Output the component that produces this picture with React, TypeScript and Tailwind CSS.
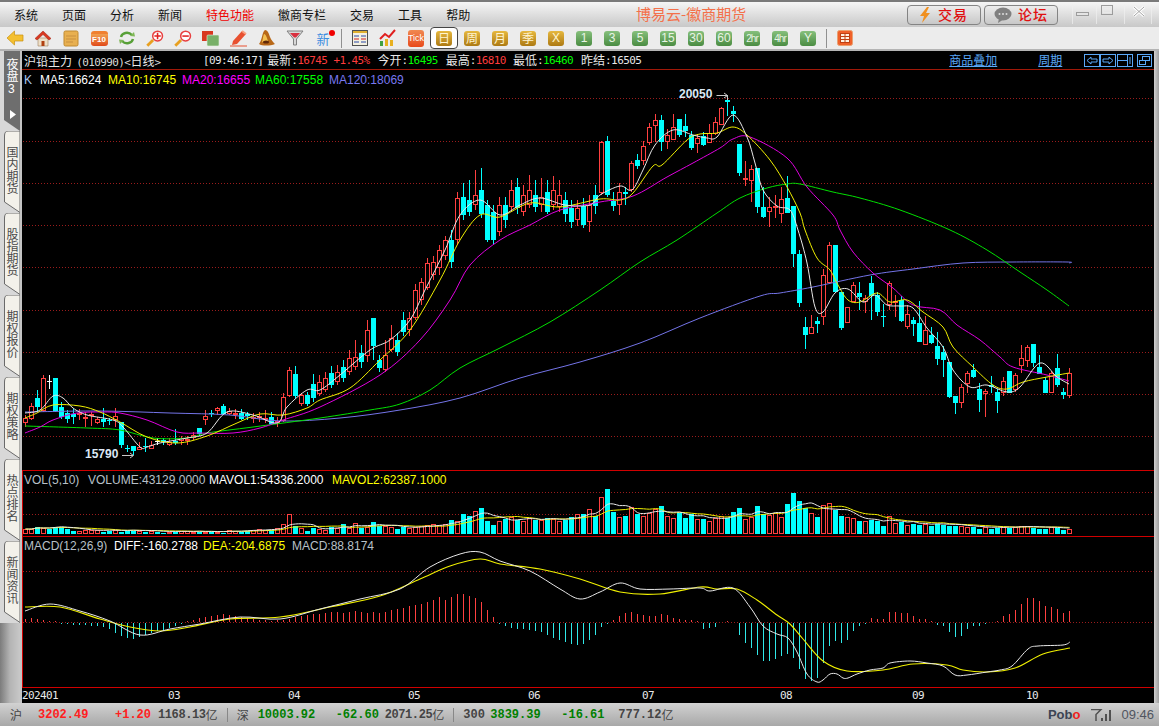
import type { ReactNode } from 'react'

const cjk = { fontFamily: '"Noto Sans CJK SC", sans-serif' }
const mono = { fontFamily: '"DejaVu Sans Mono", "Noto Sans CJK SC", monospace' }
const sans = { fontFamily: '"Liberation Sans", "Noto Sans CJK SC", sans-serif' }

// [type, body top, body bottom, high, low] in page pixels, type 0 red 1 cyan 2 white
const candles: number[][] = [
	[0,418,423,415,427],[0,406,419,403,420],[1,398,407,390,412],[0,378,411,375,412],[2,381,381,375,389],
	[1,378,411,378,412],[1,407,417,402,419],[1,413,419,410,423],[1,414,417,409,424],[0,413,415,409,420],
	[0,417,419,412,427],[0,414,416,412,426],[0,419,423,417,424],[1,419,422,408,427],[1,420,421,418,425],
	[0,416,420,408,427],[1,422,445,422,448],[1,448,449,445,452],[1,446,451,446,455],[0,447,450,442,450],
	[1,446,447,438,452],[0,445,449,441,449],[2,441,441,438,445],[1,440,442,438,445],[0,442,445,438,446],
	[1,441,443,429,445],[0,438,441,436,445],[0,439,441,436,445],[0,435,438,432,440],[1,428,434,428,436],
	[0,416,420,410,425],[1,413,414,410,417],[0,408,411,407,415],[1,406,414,404,415],[0,411,414,408,415],
	[0,413,414,409,419],[1,413,419,409,420],[1,414,416,412,420],[0,417,418,413,423],[0,416,417,412,422],
	[0,418,420,410,423],[1,417,424,412,425],[0,421,423,417,427],[0,397,421,393,422],[0,370,396,367,397],
	[1,374,396,366,398],[0,395,404,393,406],[1,395,404,392,406],[1,384,398,374,402],[0,382,394,375,396],
	[0,378,390,372,392],[1,373,385,366,388],[0,372,382,365,385],[1,367,378,360,382],[0,358,372,350,375],
	[0,357,367,340,370],[1,353,362,345,368],[0,330,356,320,362],[1,318,346,318,360],[1,360,368,355,372],
	[0,355,370,340,372],[0,338,350,325,352],[1,340,352,333,356],[1,320,332,312,336],[0,318,330,312,336],
	[0,290,318,284,320],[0,282,300,278,305],[0,263,288,258,290],[0,262,275,256,280],[0,250,268,245,275],
	[0,240,256,236,260],[1,240,262,230,268],[0,198,240,192,245],[1,197,215,183,220],[1,200,212,180,216],
	[0,195,205,170,210],[1,190,214,168,218],[1,205,240,200,242],[1,212,240,205,244],[0,205,232,197,236],
	[1,205,220,197,228],[0,190,207,180,212],[1,187,208,178,214],[0,195,212,185,216],[0,190,205,175,208],
	[1,195,207,180,212],[0,197,205,178,212],[1,192,212,180,214],[0,190,205,176,210],[0,195,207,180,212],
	[1,200,214,192,222],[1,208,222,200,228],[0,208,220,200,226],[1,206,225,198,228],[0,205,222,195,232],
	[1,195,206,185,214],[0,142,193,141,195],[1,141,195,136,197],[1,201,206,192,211],[0,192,205,183,215],
	[1,192,194,187,205],[0,163,190,161,192],[1,160,166,154,169],[0,146,161,141,165],[0,127,143,123,145],
	[0,120,126,114,142],[1,120,142,115,151],[0,135,142,129,149],[0,127,140,114,140],[1,119,135,119,137],
	[1,126,131,114,137],[1,135,148,131,150],[0,138,144,134,153],[1,136,145,132,146],[0,133,143,124,143],
	[0,122,134,117,135],[0,108,125,107,125],[1,100,102,95,116],[1,111,114,106,122],[1,144,173,144,176],
	[0,178,180,161,186],[0,169,181,165,202],[1,168,207,168,213],[1,207,217,187,218],[0,207,212,197,227],
	[0,206,208,195,218],[0,199,214,187,223],[1,198,213,176,213],[1,206,254,206,267],[1,254,303,250,307],
	[1,327,335,317,349],[0,327,334,315,334],[1,321,324,317,333],[0,275,317,269,325],[0,245,283,242,283],
	[1,245,292,245,292],[1,292,328,292,330],[0,307,323,307,323],[0,285,302,282,302],[1,293,297,282,310],
	[0,298,302,295,313],[1,283,296,276,320],[1,295,312,292,316],[1,316,316,304,327],[0,283,305,281,310],
	[0,301,303,295,317],[1,300,321,296,322],[0,314,327,305,329],[1,320,324,317,336],[1,323,342,301,342],
	[0,330,345,316,345],[1,335,343,327,344],[1,346,359,332,365],[1,352,360,346,377],[1,362,397,362,398],
	[1,396,403,396,414],[0,387,403,384,408],[0,373,384,371,393],[1,370,377,364,378],[1,389,400,383,412],
	[0,391,394,389,417],[1,385,387,376,393],[1,392,401,389,413],[0,381,393,377,396],[1,371,393,371,393],
	[0,375,390,373,392],[0,358,366,345,373],[0,347,361,345,367],[1,344,363,344,367],[1,367,374,355,374],
	[1,380,393,377,393],[0,373,393,371,393],[1,368,385,354,387],[1,392,395,388,399],[0,373,396,368,398],
]

const volumes = [
	4,4,7,5,5,7,7,5,3,2, 3,3,3,2,3,3,2,3,3,2, 2,2,2,1,1,2,2,2,1,2, 1,2,1,1,3,2,2,3,3,4, 3,4,5,9,19,8,5,3,6,4,
	3,7,5,10,5,10,6,6,12,8, 7,6,5,7,5,6,7,8,9,8, 9,14,12,20,18,22,26,13,9,12, 15,16,14,12,15,14,13,16,14,12,
	14,17,19,20,24,18,36,45,22,16, 18,26,20,17,20,24,28,17,15,21, 16,20,14,15,12,15,17,16,22,26,
	14,16,28,20,18,20,16,30,41,33, 26,20,17,28,30,24,18,16,15,13, 12,14,13,8,17,10,12,8,10,9,
	9,8,10,9,8,8,7,6,7,5, 6,5,6,6,6,6,7,7,6,5, 5,6,6,4,4,
]

const macdBars = [
	3,4,3,2,1,1,-1,-1,-2,-2, -2,-3,-3,-4,-6,-10,-13,-15,-16,-14, -12,-10,-8,-7,-5,-3,-1,1,2,4,
	5,6,7,8,7,6,5,4,3,2, 2,1,2,2,3,5,6,7,8,8, 9,10,10,9,10,11,10,9,10,9, 10,12,13,14,16,17,18,20,22,25,
	22,25,28,28,26,24,20,12,5,-1, -3,-5,-6,-6,-7,-8,-9,-12,-15,-17, -19,-21,-22,-21,-17,-12,-4,-1,2,6,
	9,10,8,7,6,6,8,7,4,3,2,2,1, -6,-5,-4,0,1,0,-12,-20,-25,-32,-38,-38,-36,-33,-31,-35,-46,-56,-58,-55,-40,
	-23,-18,-20,-17,-8,-3,-1,4,3,3,10,10,9,9,6,3,3,1,-2,-3,-9,-14,-13,-6,-3,-3,-1,0,1,6,8,12,18,24,24,21,16,15,13,9,11,
]

const ma5 = '25,413 40,410 53,396 63,398 73,408 87,415 113,420 123,427 140,447 147,447 160,443 187,438 207,433 227,412 253,415 277,423 287,407 307,390 320,390 340,375 370,350 390,340 410,320 425,290 445,250 460,215 480,200 500,215 520,205 540,198 565,205 590,205 600,195 620,186 632,190 643,170 655,145 673,130 693,135 707,138 717,137 733,115 747,137 755,163 763,190 777,206 790,210 798,230 807,263 815,307 823,312 835,293 848,289 863,302 875,295 887,305 900,306 913,308 927,328 943,347 953,370 970,387 987,385 1007,392 1020,387 1040,363 1057,377 1069,384'
const ma10 = '25,418 37,413 53,405 80,406 100,412 120,422 147,437 177,443 207,436 237,423 260,414 283,415 307,408 320,400 350,388 380,360 410,330 440,280 460,240 480,215 500,217 530,203 560,207 600,199 620,200 633,193 653,166 662,165 687,140 700,134 717,133 733,127 747,135 770,160 787,187 800,213 805,230 817,258 830,270 838,285 848,300 860,302 877,293 890,302 907,300 923,312 943,327 953,347 973,367 993,385 1007,389 1023,382 1047,377 1069,373'
const ma20 = '25,433 40,427 53,420 77,413 103,412 120,413 147,420 177,432 200,433 233,433 260,428 283,420 320,407 380,375 420,340 450,300 470,265 500,240 530,225 560,210 600,202 633,196 667,177 693,163 720,148 733,139 750,137 787,158 807,187 833,215 840,230 853,252 873,273 893,288 913,305 940,310 957,325 980,340 1000,357 1013,367 1047,375 1069,381'
const ma60 = '25,426 87,428 120,430 153,438 187,438 207,433 253,427 320,418 370,410 400,404 430,390 460,368 500,348 550,322 600,290 640,262 677,240 717,213 740,198 767,188 787,184 800,184 833,192 860,198 900,210 950,230 987,250 1020,272 1047,290 1069,306'
const ma120 = '25,412 100,411 170,413 230,415 280,421 340,418 400,410 460,398 520,378 580,362 640,343 700,318 760,296 780,293 813,287 870,275 913,269 963,263 1013,262 1067,262 1069,263'
const diff = '25,612 50,605 80,612 110,622 140,636 170,630 200,625 240,618 280,620 320,610 360,600 400,590 430,568 460,555 480,553 500,562 530,572 560,590 580,600 600,593 620,584 640,590 670,590 700,589 710,592 733,589 750,608 763,627 777,635 788,639 797,653 807,675 817,683 823,681 830,675 837,675 843,679 848,679 857,675 870,671 883,669 890,664 910,662 927,664 943,667 955,676 967,676 987,673 1000,671 1012,667 1028,650 1038,647 1063,646 1070,643'
const dea = '25,608 60,608 100,620 130,628 160,632 190,628 230,620 280,618 330,608 380,597 420,580 450,567 480,560 500,565 540,570 580,580 620,593 660,595 700,588 717,590 737,590 757,601 777,616 790,625 803,640 823,662 847,672 883,671 913,665 947,666 963,671 987,673 1015,669 1043,655 1070,649'

// turns the hand-read points into a soft curve, the averages are not angular in the picture
function curve(points: string) {
	const p = points.split(' ').map(s => s.split(',').map(Number))
	let d = `M${p[0][0]} ${p[0][1]}`
	for (let i = 0; i < p.length - 1; i++) {
		const a = p[Math.max(i - 1, 0)]
		const b = p[i]
		const c = p[i + 1]
		const e = p[Math.min(i + 2, p.length - 1)]
		const c1 = [b[0] + (c[0] - a[0]) / 6, b[1] + (c[1] - a[1]) / 6]
		const c2 = [c[0] - (e[0] - b[0]) / 6, c[1] - (e[1] - b[1]) / 6]
		d += `C${c1[0]} ${c1[1]} ${c2[0]} ${c2[1]} ${c[0]} ${c[1]}`
	}
	return d
}

function avgLine(period: number) {
	return volumes
		.map((_, i) => {
			const part = volumes.slice(Math.max(0, i - period + 1), i + 1)
			const avg = part.reduce((a, b) => a + b, 0) / part.length
			return `${25.5 + i * 6},${533 - avg}`
		})
		.join(' ')
}

function Grid({ ys }: { ys: number[] }) {
	return (
		<>
			{ys.map(y => (
				<line key={y} x1={23} x2={1154} y1={y + 0.5} y2={y + 0.5} stroke="#9a1c1c" strokeDasharray="1 2" />
			))}
		</>
	)
}

function MainChart() {
	return (
		<svg className="block" width={1132} height={400} viewBox="22 70 1132 400">
			<Grid ys={[98, 141, 183, 225, 267, 310, 352, 394, 436]} />
			<g shapeRendering="crispEdges">
				{candles.map(([t, top, bot, hi, lo], i) => {
					const x = 25 + i * 6
					if (t === 0) {
						return (
							<g key={i}>
								<rect x={x} y={hi} width={1} height={Math.max(top - hi, 0)} fill="#ff4040" />
								<rect x={x} y={bot} width={1} height={Math.max(lo - bot, 0)} fill="#ff4040" />
								<rect x={x - 1.5} y={top + 0.5} width={4} height={Math.max(bot - top - 1, 1)} fill="black" stroke="#ff4040" />
							</g>
						)
					}
					const color = t === 1 ? '#00ffff' : '#ffffff'
					return (
						<g key={i}>
							<rect x={x} y={hi} width={1} height={lo - hi} fill={color} />
							<rect x={x - 2} y={top} width={5} height={Math.max(bot - top, 1)} fill={color} />
						</g>
					)
				})}
			</g>
			<g fill="none" strokeWidth={1}>
				<path d={curve(ma120)} stroke="#7474e8" />
				<path d={curve(ma60)} stroke="#00e000" />
				<path d={curve(ma20)} stroke="#e000e0" />
				<path d={curve(ma10)} stroke="#f0f000" />
				<path d={curve(ma5)} stroke="#e8e8e8" />
			</g>
			<path d="M716.5 95.5H727.5V100M724 93l3.5 2.5-3.5 2.5" fill="none" stroke="#c8c8c8" />
			<path d="M122 455.5H133M130 453l3.5 2.5-3.5 2.5" fill="none" stroke="#c8c8c8" />
		</svg>
	)
}

function VolChart() {
	return (
		<svg className="block" width={1131} height={64} viewBox="23 471 1131 64">
			<Grid ys={[492, 514]} />
			<g shapeRendering="crispEdges">
				{volumes.map((h, i) => {
					const x = 25 + i * 6
					const up = candles[i][0] === 0
					return up ? (
						<rect key={i} x={x - 1.5} y={533.5 - h} width={4} height={h} fill="black" stroke="#ff4040" />
					) : (
						<rect key={i} x={x - 2} y={534 - h} width={5} height={h} fill="#00ffff" />
					)
				})}
			</g>
			<path d={curve(avgLine(10))} fill="none" stroke="#f0f000" />
			<path d={curve(avgLine(5))} fill="none" stroke="#e8e8e8" />
		</svg>
	)
}

function MacdChart() {
	return (
		<svg className="block" width={1131} height={149} viewBox="23 538 1131 149">
			<Grid ys={[572, 623]} />
			<g shapeRendering="crispEdges">
				{macdBars.map((v, i) => {
					const x = 25 + i * 6
					return v >= 0 ? (
						<rect key={i} x={x} y={623 - v} width={1} height={v} fill="#ff4040" />
					) : (
						<rect key={i} x={x} y={624} width={1} height={-v} fill="#30e8e8" />
					)
				})}
			</g>
			<path d={curve(dea)} fill="none" stroke="#f0f000" strokeWidth={1.1} />
			<path d={curve(diff)} fill="none" stroke="#e8e8e8" />
		</svg>
	)
}

function Tab({ label }: { label: string }) {
	return (
		<div className="relative h-[82px] w-[20px] shrink-0 bg-[#d8d8d8]">
			<svg className="absolute inset-0" width={20} height={82}>
				<path d="M20 0H8Q4.500 0 4.500 5V71L20 81.500Z" fill="#f3f1ea" stroke="#6a6a6a" />
			</svg>
			<span
				className="absolute left-[6px] top-[15px] text-[12px] leading-[12px] text-[#4a4a4a] [writing-mode:vertical-rl]"
				style={cjk}
			>
				{label}
			</span>
		</div>
	)
}

function Sidebar() {
	return (
		<div className="flex w-[22px] shrink-0 border-r-2 border-[#c4c4c4] bg-gradient-to-r from-[#7c7c7c] via-[#b4b4b4] to-[#c8c8c8]">
			<div className="flex flex-col">
				<div className="relative h-[80px] w-[20px] shrink-0 bg-[#d8d8d8]">
					<svg className="absolute inset-0" width={20} height={80}>
						<path d="M4 0H20V80L4 69Z" fill="#6e6e6e" />
					</svg>
					<span className="absolute left-[6px] top-[7px] text-[12px] leading-[12px] text-white [writing-mode:vertical-rl]" style={cjk}>
						夜盘
					</span>
					<span className="absolute left-[8px] top-[32px] text-[12px] leading-[13px] text-white" style={sans}>3</span>
					<svg className="absolute left-[10px] top-[59px]" width={6} height={9}>
						<path d="M0 0L6 4.500L0 9Z" fill="#fff" />
					</svg>
				</div>
				<Tab label="国内期货" />
				<Tab label="股指期货" />
				<Tab label="期权报价" />
				<Tab label="期权策略" />
				<Tab label="热点排名" />
				<Tab label="新闻资讯" />
			</div>
		</div>
	)
}

function MenuBar() {
	const items = ['系统', '页面', '分析', '新闻', '特色功能', '徽商专栏', '交易', '工具', '帮助']
	return (
		<div className="relative flex h-[27px] shrink-0 items-center border-t-[2px] border-[#7a7a7a] bg-gradient-to-b from-[#f6f6f6] to-[#c8c8c8] pl-[14px]">
			<div className="flex gap-6 text-[12px] text-[#111]" style={cjk}>
				{items.map(t => (
					<span key={t} className={t === '特色功能' ? 'text-[#f00000]' : ''}>{t}</span>
				))}
			</div>
			<div className="absolute left-[636px] top-[2px] text-[15px] leading-[20px] text-[#f4704a]" style={cjk}>
				博易云-徽商期货
			</div>
			<div className="ml-auto flex items-center">
				<button className="flex h-[20px] w-[74px] items-center rounded-[4px] border border-[#848484] bg-gradient-to-b from-[#ececec] to-[#c8c8c8] pl-[10px]">
					<svg width={14} height={16} viewBox="0 0 14 16">
						<path d="M9 0L2 9H6L4 16L12 6H8L11 0Z" fill="#f09020" />
					</svg>
					<span className="ml-[6px] text-[14px] font-medium tracking-[1px] text-[#e01010]" style={cjk}>交易</span>
				</button>
				<button className="ml-[3px] flex h-[20px] w-[74px] items-center rounded-[4px] border border-[#848484] bg-gradient-to-b from-[#ececec] to-[#c8c8c8] pl-[9px]">
					<svg width={18} height={16} viewBox="0 0 18 16">
						<ellipse cx={9} cy={7} rx={8.500} ry={6.500} fill="#808080" />
						<path d="M5 11L4 16L10 12Z" fill="#808080" />
						<circle cx={5.500} cy={7} r={1} fill="#ddd" />
						<circle cx={9} cy={7} r={1} fill="#ddd" />
						<circle cx={12.500} cy={7} r={1} fill="#ddd" />
					</svg>
					<span className="ml-[6px] text-[14px] font-medium tracking-[1px] text-[#e01010]" style={cjk}>论坛</span>
				</button>
				<svg className="ml-[13px] mr-[6px]" width={82} height={22} viewBox="0 0 82 22">
					<g fill="none" stroke="#f0f0f0">
						<path d="M1.500 0V20M25.500 0V20M53.500 0V20M80.500 0V20" opacity={0.7} />
					</g>
					<rect x={5.500} y={8.500} width={12} height={3} fill="#e4e4e4" stroke="#9c9c9c" />
					<rect x={30.500} y={1.500} width={11} height={9} fill="none" stroke="#9c9c9c" />
					<rect x={32.500} y={3.500} width={7} height={5} fill="none" stroke="#e8e8e8" />
					<path d="M63 3L73 12M73 3L63 12" stroke="#fff" strokeWidth={3} />
					<path d="M63 3L73 12M73 3L63 12" stroke="#a4a4a4" strokeWidth={1} />
				</svg>
			</div>
		</div>
	)
}

function TBtn({ label, green, small }: { label: string; green?: boolean; small?: boolean }) {
	const tone = green
		? 'from-[#86c07c] to-[#4a8c42] text-[#e8f4e4]'
		: 'from-[#e6b83e] to-[#ad7a12] text-[#fff4d0]'
	return (
		<span
			className={`flex h-[15px] w-4 items-center justify-center rounded-[3px] bg-gradient-to-b ${tone} ${small ? 'text-[10px] tracking-[-1px]' : 'text-[12px]'}`}
			style={label.length > 1 || /[0-9XY]/.test(label) ? sans : cjk}
		>
			{label}
		</span>
	)
}

function Slot({ children }: { children: ReactNode }) {
	return <div className="flex h-full w-7 shrink-0 items-center justify-center">{children}</div>
}

function Sep() {
	return (
		<div className="flex h-full w-[9px] shrink-0 items-center justify-center">
			<div className="h-[19px] w-px bg-[#909090]" />
		</div>
	)
}

function Toolbar() {
	return (
		<div className="flex h-[24px] shrink-0 items-center border-b-[2px] border-[#b4b4b4] bg-[#ececec] pl-px">
			<Slot>
				<svg width={18} height={16} viewBox="0 0 18 16">
					<path d="M8.500 1L1 8L8.500 15V11H17V5H8.500Z" fill="#f4c030" stroke="#c89010" strokeWidth={0.7} />
				</svg>
			</Slot>
			<Slot>
				<svg width={18} height={17} viewBox="0 0 18 17">
					<path d="M4 8H14V16H4Z" fill="#eee0c8" stroke="#a08060" strokeWidth={0.6} />
					<path d="M7.500 11H10.500V16H7.500Z" fill="#b04010" />
					<path d="M9 1L1 8.500L3 10L9 4.500L15 10L17 8.500Z" fill="#d83820" stroke="#a02010" strokeWidth={0.5} />
				</svg>
			</Slot>
			<Slot>
				<svg width={16} height={17} viewBox="0 0 16 17">
					<rect x={1} y={1} width={14} height={15} rx={1.500} fill="#e8b050" stroke="#c08a30" />
					<path d="M3 6H13M3 9H13M3 12H10" stroke="#c89040" />
				</svg>
			</Slot>
			<Slot>
				<div className="flex h-[15px] w-[17px] items-center justify-center rounded-[3px] border-t-[3px] border-[#f08030] bg-gradient-to-b from-[#f0a050] to-[#e04818] text-[8px] font-bold leading-none text-white" style={sans}>
					F10
				</div>
			</Slot>
			<Slot>
				<svg width={18} height={16} viewBox="0 0 18 16" fill="none">
					<path d="M3 7C4 3 10 1 14 5" stroke="#58a038" strokeWidth={2.400} />
					<path d="M15 9C14 13 8 15 4 11" stroke="#58a038" strokeWidth={2.400} />
					<path d="M12 6L17 6.500L16 2Z M6 10L1 9.500L2 14Z" fill="#80b858" />
				</svg>
			</Slot>
			{['M5.500 4.500H10.500M8 2V7', 'M5.500 4.500H10.500'].map(d => (
				<Slot key={d}>
					<svg width={18} height={18} viewBox="-1 -1 14 14" fill="none">
						<path d="M4.500 7.500L0 12" stroke="#e8a020" strokeWidth={2.200} />
						<circle cx={8} cy={4.500} r={3.800} fill="#fff" stroke="#e84040" strokeWidth={1.200} />
						<path d={d} stroke="#e02020" strokeWidth={1.200} />
					</svg>
				</Slot>
			))}
			<Slot>
				<svg width={20} height={17} viewBox="0 0 20 17">
					<rect x={1} y={1} width={11} height={10} fill="#d83820" />
					<rect x={6} y={5} width={12} height={11} rx={1} fill="#78b068" stroke="#e4f0e0" strokeWidth={0.6} />
				</svg>
			</Slot>
			<Slot>
				<svg width={20} height={18} viewBox="0 0 20 18" fill="none">
					<path d="M4 12L13 2L17 5L8 15L3 16Z" fill="#e85030" />
					<path d="M13 2L17 5" stroke="#f8a080" strokeWidth={2} />
					<path d="M1 17H18" stroke="#e85030" />
				</svg>
			</Slot>
			<Slot>
				<svg width={20} height={18} viewBox="0 0 20 18">
					<path d="M8 1C11 1 12 5 13 8S17 14 18 15C13 17 5 17 2 15C5 12 5 3 8 1Z" fill="#b86818" />
					<path d="M7 5C9 5 10 9 11 12C8 14 5 13 5 13C6 10 6 7 7 5Z" fill="#f4c050" />
					<ellipse cx={9} cy={13} rx={3} ry={1.600} fill="#602808" />
				</svg>
			</Slot>
			<Slot>
				<svg width={18} height={18} viewBox="0 0 18 18">
					<path d="M1 2H17L10.500 10V16H7.500V10Z" fill="#d8d8d8" stroke="#808080" />
					<path d="M4 4H14L10 8.500H8Z" fill="#d83040" />
				</svg>
			</Slot>
			<Slot>
				<div className="relative text-[13px] leading-none text-[#3c8ce0]" style={cjk}>
					新
					<span className="absolute -right-[5px] -top-[2px] h-[6px] w-[6px] rounded-full bg-[#f00000]" />
				</div>
			</Slot>
			<Sep />
			<Slot>
				<svg width={16} height={16} viewBox="0 0 16 16">
					<rect x={0.500} y={0.500} width={15} height={15} fill="#f4f0e0" stroke="#505050" />
					<rect x={1} y={1} width={14} height={2} fill="#e0b030" />
					<path d="M2 6H7M9 6H14" stroke="#2848a8" />
					<path d="M2 9H7M9 9H14" stroke="#d02020" />
					<path d="M2 12H7M9 12H14" stroke="#2848a8" />
				</svg>
			</Slot>
			<Slot>
				<svg width={18} height={18} viewBox="0 0 18 18" fill="none">
					<rect x={1} y={12} width={3} height={5} fill="#40a040" />
					<rect x={6} y={10} width={3} height={7} fill="#e8b020" />
					<rect x={11} y={11} width={3} height={6} fill="#e8b020" />
					<path d="M1 10L6 5L10 8L16 1" stroke="#e02020" strokeWidth={2} />
				</svg>
			</Slot>
			<Slot>
				<span className="flex h-[17px] w-4 items-center justify-center overflow-hidden rounded-[3px] bg-gradient-to-b from-[#f08850] to-[#e84818] text-[9px] leading-none text-white" style={sans}>
					Tick
				</span>
			</Slot>
			<div className="flex h-[22px] w-7 shrink-0 items-center justify-center rounded-[4px] border border-[#444] bg-white">
				<TBtn label="日" />
			</div>
			<Slot><TBtn label="周" /></Slot>
			<Slot><TBtn label="月" /></Slot>
			<Slot><TBtn label="季" /></Slot>
			<Slot><TBtn label="X" /></Slot>
			<Slot><TBtn label="1" green /></Slot>
			<Slot><TBtn label="3" green /></Slot>
			<Slot><TBtn label="5" green /></Slot>
			<Slot><TBtn label="15" green /></Slot>
			<Slot><TBtn label="30" green /></Slot>
			<Slot><TBtn label="60" green /></Slot>
			<Slot><TBtn label="2hr" green small /></Slot>
			<Slot><TBtn label="4hr" green small /></Slot>
			<Slot><TBtn label="Y" green /></Slot>
			<Sep />
			<Slot>
				<svg width={16} height={16} viewBox="0 0 16 16">
					<rect x={0.500} y={0.500} width={15} height={15} rx={2} fill="#f06028" stroke="#e8a070" />
					<rect x={3.500} y={3.500} width={9} height={9} fill="#fff0e0" stroke="#c04010" />
					<path d="M3.500 6.500H12.500M3.500 9.500H12.500M8 3.500V12.500" stroke="#c04010" />
				</svg>
			</Slot>
		</div>
	)
}

function Zh({ children, className = '' }: { children: ReactNode; className?: string }) {
	return <span className={`shrink-0 whitespace-nowrap text-[12px] ${className}`} style={cjk}>{children}</span>
}

function Num({ children, className = 'text-[#e8e8e8]' }: { children: ReactNode; className?: string }) {
	return <span className={`shrink-0 whitespace-nowrap text-[11px] tracking-[-0.6px] ${className}`} style={mono}>{children}</span>
}

function QuoteRow() {
	return (
		<div className="flex h-[19px] shrink-0 items-center border-b border-[#a01808] pl-[2px] leading-none text-[#e8e8e8]">
			<div className="w-[179px] shrink-0 whitespace-nowrap">
				<Zh>沪铅主力</Zh> <Num className="text-[#d8d8d8]">(010990)&lt;</Num><Zh>日线</Zh><Num className="text-[#d8d8d8]">&gt;</Num>
			</div>
			<Num>[09:46:17]</Num>
			<Zh className="ml-[4px]">最新</Zh><Num>:</Num><Num className="text-[#ff3c3c]">16745</Num>
			<Num className="ml-[6px] text-[#ff3c3c]">+1.45%</Num>
			<Zh className="ml-[8px]">今开</Zh><Num>:</Num><Num className="text-[#00ff00]">16495</Num>
			<Zh className="ml-[8px]">最高</Zh><Num>:</Num><Num className="text-[#ff3c3c]">16810</Num>
			<Zh className="ml-[7px]">最低</Zh><Num>:</Num><Num className="text-[#00ff00]">16460</Num>
			<Zh className="ml-[8px]">昨结</Zh><Num>:</Num><Num>16505</Num>
			<Zh className="ml-[308px] text-[#5aa8f8] underline">商品叠加</Zh>
			<Zh className="ml-[41px] text-[#5aa8f8] underline">周期</Zh>
			<svg className="ml-[22px] shrink-0" width={68} height={13} viewBox="0 0 68 13" fill="none" stroke="#5aa8f8">
				<rect x={0.500} y={0.500} width={15} height={12} />
				<path d="M3 6.500L7 3V5H13V8H7V10Z" />
				<rect x={16.500} y={0.500} width={15} height={12} />
				<path d="M29 6.500L25 3V5H19V8H25V10Z" />
				<rect x={33.500} y={0.500} width={15} height={12} />
				<path d="M33.500 6.500H43.500M43.500 0.500V12.500M46 3V10" />
				<rect x={53.500} y={0.500} width={14} height={12} />
				<rect x={58.500} y={2.500} width={7} height={4} />
				<rect x={55.500} y={6.500} width={6} height={4} />
			</svg>
		</div>
	)
}

function Legend({ items }: { items: [string, string, number][] }) {
	return (
		<div className="absolute left-0 top-0 flex whitespace-nowrap text-[12px] leading-[14px]" style={sans}>
			{items.map(([t, color, left]) => (
				<span key={t} className="absolute" style={{ color, left }}>{t}</span>
			))}
		</div>
	)
}

const dates: [string, number][] = [['202401', 0], ['03', 146], ['04', 266], ['05', 386], ['06', 506], ['07', 620], ['08', 758], ['09', 890], ['10', 1004]]

function StatusBar() {
	const n = 'font-bold text-[12px]'
	return (
		<div className="relative flex h-[23px] shrink-0 items-center bg-gradient-to-b from-[#d2d2d2] to-[#a8a8a8] pl-[10px] leading-none whitespace-nowrap text-[#444]" style={{ fontFamily: '"Liberation Mono", "Noto Sans CJK SC", monospace' }}>
			<Zh className="w-[28px] shrink-0">沪</Zh>
			<span className={`${n} w-[77px] text-[#ff2020]`}>3202.49</span>
			<span className={`${n} w-[43px] text-[#ff2020]`}>+1.20</span>
			<span className={`${n} tracking-[-0.4px]`}>1168.13</span><Zh>亿</Zh>
			<span className="ml-[9px] mr-[9px] h-[14px] w-px bg-[#888]" />
			<Zh className="w-[21px] shrink-0">深</Zh>
			<span className={`${n} w-[78px] text-[#008000]`}>10003.92</span>
			<span className={`${n} w-[49px] text-[#008000]`}>-62.60</span>
			<span className={`${n} tracking-[-0.4px]`}>2071.25</span><Zh>亿</Zh>
			<span className="ml-[9px] mr-[9px] h-[14px] w-px bg-[#888]" />
			<span className={`${n} w-[27px]`}>300</span>
			<span className={`${n} w-[71px] text-[#008000]`}>3839.39</span>
			<span className={`${n} w-[57px] text-[#008000]`}>-16.61</span>
			<span className={n}>777.12</span><Zh>亿</Zh>
			<div className="ml-auto mr-[5px] flex items-center" style={sans}>
				<span className="text-[13px] font-bold text-[#3c4454]">Pob<span className="text-[#f02020]">o</span></span>
				<svg className="ml-[10px]" width={22} height={12} viewBox="0 0 22 12">
					<path d="M1 0.500H11L6 5.500V12" fill="none" stroke="#505050" strokeWidth={1.500} />
					<rect x={11} y={9} width={2} height={3} fill="#505050" />
					<rect x={15} y={5} width={2} height={7} fill="#505050" />
					<rect x={19} y={1} width={2} height={11} fill="#505050" />
				</svg>
				<span className="ml-[9px] text-[13px] text-[#505560]">09:46</span>
			</div>
		</div>
	)
}

export default function App() {
	return (
		<div className="flex h-[726px] w-[1159px] flex-col overflow-hidden bg-[#c8c8c8]">
			<MenuBar />
			<Toolbar />
			<div className="flex min-h-0 flex-1">
				<Sidebar />
				<div className="flex w-[1132px] flex-col bg-black">
					<QuoteRow />
					<div className="relative h-[401px] shrink-0 border-b border-[#d00000]">
						<MainChart />
						<div className="absolute left-0 top-[3px]">
							<Legend items={[['K', '#a8c8f0', 2], ['MA5:16624', '#ffffff', 18], ['MA10:16745', '#ffff00', 86], ['MA20:16655', '#ff00ff', 160], ['MA60:17558', '#00ff00', 233], ['MA120:18069', '#7878f0', 307]]} />
						</div>
						<div className="pointer-events-none absolute left-[657px] top-[17px] text-[12px] font-bold leading-[14px] text-[#dce8f5]" style={sans}>20050</div>
						<div className="pointer-events-none absolute left-[63px] top-[377px] text-[12px] font-bold leading-[14px] text-[#dce8f5]" style={sans}>15790</div>
					</div>
					<div className="relative h-[66px] shrink-0 border-b border-l border-[#d00000]">
						<VolChart />
						<div className="absolute left-[-1px] top-[2px]">
							<Legend items={[['VOL(5,10)', '#b8c0c8', 2], ['VOLUME:43129.0000', '#b8c0c8', 66], ['MAVOL1:54336.2000', '#ffffff', 187], ['MAVOL2:62387.1000', '#ffff00', 310]]} />
						</div>
					</div>
					<div className="relative h-[151px] shrink-0 border-b border-l border-[#d00000]">
						<MacdChart />
						<div className="absolute left-[-1px] top-[2px]">
							<Legend items={[['MACD(12,26,9)', '#b8c0c8', 2], ['DIFF:-160.2788', '#ffffff', 92], ['DEA:-204.6875', '#ffff00', 181], ['MACD:88.8174', '#b8c0c8', 270]]} />
						</div>
					</div>
					<div className="relative h-[15px] shrink-0 leading-[15px]">
						{dates.map(([t, left]) => (
							<span key={t} className="absolute text-[11px] tracking-[-0.6px] text-[#e8e8e8]" style={{ ...mono, left }}>{t}</span>
						))}
					</div>
				</div>
				<div className="w-[5px] bg-gradient-to-r from-[#d0d0d0] to-[#a0a0a0]" />
			</div>
			<StatusBar />
		</div>
	)
}
